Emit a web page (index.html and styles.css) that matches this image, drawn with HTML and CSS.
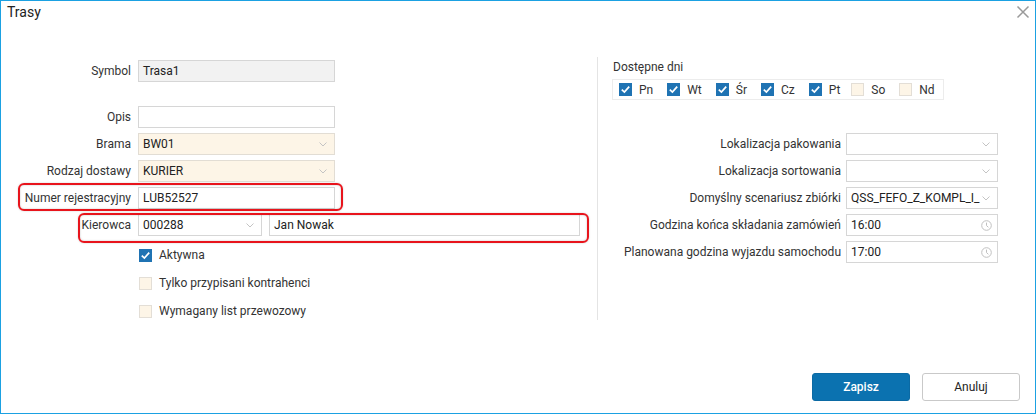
FILE: index.html
```html
<!DOCTYPE html>
<html lang="pl">
<head>
<meta charset="utf-8">
<title>Trasy</title>
<link rel="stylesheet" href="styles.css">
</head>
<body>
<div class="dialog">
  <div class="header">
    <span class="title">Trasy</span>
    <span class="close"><svg width="14" height="14" viewBox="0 0 14 14"><path d="M1.5 1.5 L12.5 12.5 M12.5 1.5 L1.5 12.5" stroke="#9a9a9a" stroke-width="1.5" fill="none"/></svg></span>
  </div>
  <div class="body">
    <div class="left">
      <div class="row"><span class="lbl">Symbol</span><div class="field w197 ro">Trasa1</div></div>
      <div class="row opis"><span class="lbl">Opis</span><div class="field w197"></div></div>
      <div class="row"><span class="lbl">Brama</span><div class="field w197 req"><span class="val">BW01</span><svg class="chev" width="8" height="5" viewBox="0 0 8 5"><polyline points="0.5,0.5 4,4 7.5,0.5" fill="none" stroke="#c4c4c4"/></svg></div></div>
      <div class="row"><span class="lbl">Rodzaj dostawy</span><div class="field w197 req"><span class="val">KURIER</span><svg class="chev" width="8" height="5" viewBox="0 0 8 5"><polyline points="0.5,0.5 4,4 7.5,0.5" fill="none" stroke="#c4c4c4"/></svg></div></div>
      <div class="row"><span class="lbl">Numer rejestracyjny</span><div class="field w197">LUB52527</div></div>
      <div class="row"><span class="lbl">Kierowca</span><div class="field w124"><span class="val">000288</span><svg class="chev" width="8" height="5" viewBox="0 0 8 5"><polyline points="0.5,0.5 4,4 7.5,0.5" fill="none" stroke="#c4c4c4"/></svg></div><div class="field w311">Jan Nowak</div></div>
      <div class="checks">
        <div class="check"><svg class="cb" width="13" height="13" viewBox="0 0 13 13"><rect width="13" height="13" fill="#1f73b3"/><path d="M2.8 6.6 L5.4 9.1 L10.2 3.6" fill="none" stroke="#fff" stroke-width="1.7"/></svg><span>Aktywna</span></div>
        <div class="check"><span class="cb empty"></span><span>Tylko przypisani kontrahenci</span></div>
        <div class="check"><span class="cb empty"></span><span>Wymagany list przewozowy</span></div>
      </div>
    </div>
    <div class="divider"></div>
    <div class="right">
      <div class="days-label">Dostępne dni</div>
      <div class="days">
        <div class="day"><svg class="cb" width="13" height="13" viewBox="0 0 13 13"><rect width="13" height="13" fill="#1f73b3"/><path d="M2.8 6.6 L5.4 9.1 L10.2 3.6" fill="none" stroke="#fff" stroke-width="1.7"/></svg><span>Pn</span></div>
        <div class="day"><svg class="cb" width="13" height="13" viewBox="0 0 13 13"><rect width="13" height="13" fill="#1f73b3"/><path d="M2.8 6.6 L5.4 9.1 L10.2 3.6" fill="none" stroke="#fff" stroke-width="1.7"/></svg><span>Wt</span></div>
        <div class="day"><svg class="cb" width="13" height="13" viewBox="0 0 13 13"><rect width="13" height="13" fill="#1f73b3"/><path d="M2.8 6.6 L5.4 9.1 L10.2 3.6" fill="none" stroke="#fff" stroke-width="1.7"/></svg><span>Śr</span></div>
        <div class="day"><svg class="cb" width="13" height="13" viewBox="0 0 13 13"><rect width="13" height="13" fill="#1f73b3"/><path d="M2.8 6.6 L5.4 9.1 L10.2 3.6" fill="none" stroke="#fff" stroke-width="1.7"/></svg><span>Cz</span></div>
        <div class="day pt"><svg class="cb" width="13" height="13" viewBox="0 0 13 13"><rect width="13" height="13" fill="#1f73b3"/><path d="M2.8 6.6 L5.4 9.1 L10.2 3.6" fill="none" stroke="#fff" stroke-width="1.7"/></svg><span>Pt</span></div>
        <div class="day"><span class="cb empty"></span><span>So</span></div>
        <div class="day"><span class="cb empty"></span><span>Nd</span></div>
      </div>
      <div class="rfields">
        <div class="row"><span class="lbl rl">Lokalizacja pakowania</span><div class="field w152"><span class="val"></span><svg class="chev" width="8" height="5" viewBox="0 0 8 5"><polyline points="0.5,0.5 4,4 7.5,0.5" fill="none" stroke="#c4c4c4"/></svg></div></div>
        <div class="row"><span class="lbl rl">Lokalizacja sortowania</span><div class="field w152"><span class="val"></span><svg class="chev" width="8" height="5" viewBox="0 0 8 5"><polyline points="0.5,0.5 4,4 7.5,0.5" fill="none" stroke="#c4c4c4"/></svg></div></div>
        <div class="row"><span class="lbl rl">Domyślny scenariusz zbiórki</span><div class="field w152"><span class="val">QSS_FEFO_Z_KOMPL_I_</span><svg class="chev" width="8" height="5" viewBox="0 0 8 5"><polyline points="0.5,0.5 4,4 7.5,0.5" fill="none" stroke="#c4c4c4"/></svg></div></div>
        <div class="row"><span class="lbl rl">Godzina końca składania zamówień</span><div class="field w152"><span class="val">16:00</span><svg class="clock" width="11" height="11" viewBox="0 0 11 11"><circle cx="5.5" cy="5.5" r="4.8" fill="none" stroke="#c0c0c0"/><path d="M5.5 2.6 V5.6 L7.4 7.3" fill="none" stroke="#c0c0c0"/></svg></div></div>
        <div class="row"><span class="lbl rl">Planowana godzina wyjazdu samochodu</span><div class="field w152"><span class="val">17:00</span><svg class="clock" width="11" height="11" viewBox="0 0 11 11"><circle cx="5.5" cy="5.5" r="4.8" fill="none" stroke="#c0c0c0"/><path d="M5.5 2.6 V5.6 L7.4 7.3" fill="none" stroke="#c0c0c0"/></svg></div></div>
      </div>
    </div>
  </div>
  <div class="footer">
    <button class="btn primary">Zapisz</button>
    <button class="btn">Anuluj</button>
  </div>
  <div class="mark mark-nr"></div>
  <div class="mark mark-kier"></div>
</div>
</body>
</html>
```
FILE: styles.css
```css
* { box-sizing: border-box; }
html, body { margin: 0; padding: 0; background: #fff; }
body {
  font-family: "Roboto", "Liberation Sans", sans-serif;
  font-size: 12px;
  color: #333;
}
.dialog {
  position: relative;
  width: 1036px;
  height: 414px;
  border: 1px solid #1ba1e2;
  background: #fff;
  display: flex;
  flex-direction: column;
}
.header {
  height: 56px;
  flex: none;
  display: flex;
  justify-content: space-between;
  align-items: flex-start;
  padding: 3px 5px 0 6px;
}
.title {
  font-size: 14px;
  line-height: 16px;
  color: #222;
}
.close { display: block; margin-top: 1px; height: 14px; }
.close svg { display: block; }
.body {
  height: 263px;
  flex: none;
  display: flex;
}
.left {
  width: 596px;
  flex: none;
  padding: 3px 0 0 7px;
  display: flex;
  flex-direction: column;
}
.divider {
  width: 1px;
  flex: none;
  background: #e4e4e4;
}
.right {
  flex: 1;
  padding: 3px 0 0 14px;
  display: flex;
  flex-direction: column;
  align-items: flex-start;
}
.row {
  display: flex;
  align-items: center;
  height: 22px;
  margin-bottom: 5px;
  flex: none;
}
.row.opis { margin-top: 19px; }
.lbl {
  width: 123px;
  flex: none;
  text-align: right;
  margin-right: 7px;
  white-space: nowrap;
  color: #333;
}
.lbl.rl { width: 229px; margin-right: 5px; }
.field {
  height: 22px;
  border: 1px solid #d6d6d6;
  background: #fff;
  padding: 0 7px 0 4px;
  display: flex;
  align-items: center;
  justify-content: space-between;
  color: #222;
  white-space: nowrap;
  flex: none;
}
.field.ro { background: #f2f2f2; }
.field.req { background: #fdf5e7; border-color: #e2ddd4; }
.w197 { width: 197px; }
.w124 { width: 124px; margin-right: 7px; }
.w311 { width: 311px; }
.w152 { width: 152px; }
.val { white-space: nowrap; }
.chev { flex: none; display: block; }
.clock { flex: none; display: block; margin-right: -2px; }
.checks {
  padding-left: 131px;
}
.check {
  height: 28px;
  display: flex;
  align-items: center;
  gap: 7px;
  color: #333;
}
.cb { display: block; flex: none; width: 13px; height: 13px; }
.cb.empty {
  background: #fdf5e7;
  border: 1px solid #e3ded6;
}
.days-label {
  margin-left: 1px;
  line-height: 14px;
  color: #333;
}
.days {
  margin-top: 5px;
  width: 332px;
  height: 21px;
  border: 1px solid #ececec;
  display: flex;
  align-items: center;
  padding-left: 6px;
  gap: 14px;
}
.day {
  display: flex;
  align-items: center;
  gap: 7px;
  color: #333;
}
.day.pt { margin-right: -3px; }
.rfields { margin-top: 33px; }
.footer {
  margin-top: auto;
  display: flex;
  justify-content: flex-end;
  gap: 12px;
  padding: 0 15px 12px 0;
}
.btn {
  width: 98px;
  height: 28px;
  border-radius: 3px;
  border: 1px solid #c9c9c9;
  background: #fff;
  color: #222;
  font-family: "Roboto", "Liberation Sans", sans-serif;
  font-size: 12px;
  padding: 0;
}
.btn.primary {
  background: #0b72b0;
  border-color: #0b6aa4;
  color: #fff;
  font-weight: 500;
}
.mark {
  position: absolute;
  border: 2px solid #e8141c;
  border-radius: 6px;
  box-shadow: inset 0 0 2px rgba(0,0,0,0.25), 0 0 2px rgba(0,0,0,0.2);
}
.mark-nr { left: 17px; top: 182px; width: 325px; height: 28px; }
.mark-kier { left: 77px; top: 212px; width: 511px; height: 30px; }
```
